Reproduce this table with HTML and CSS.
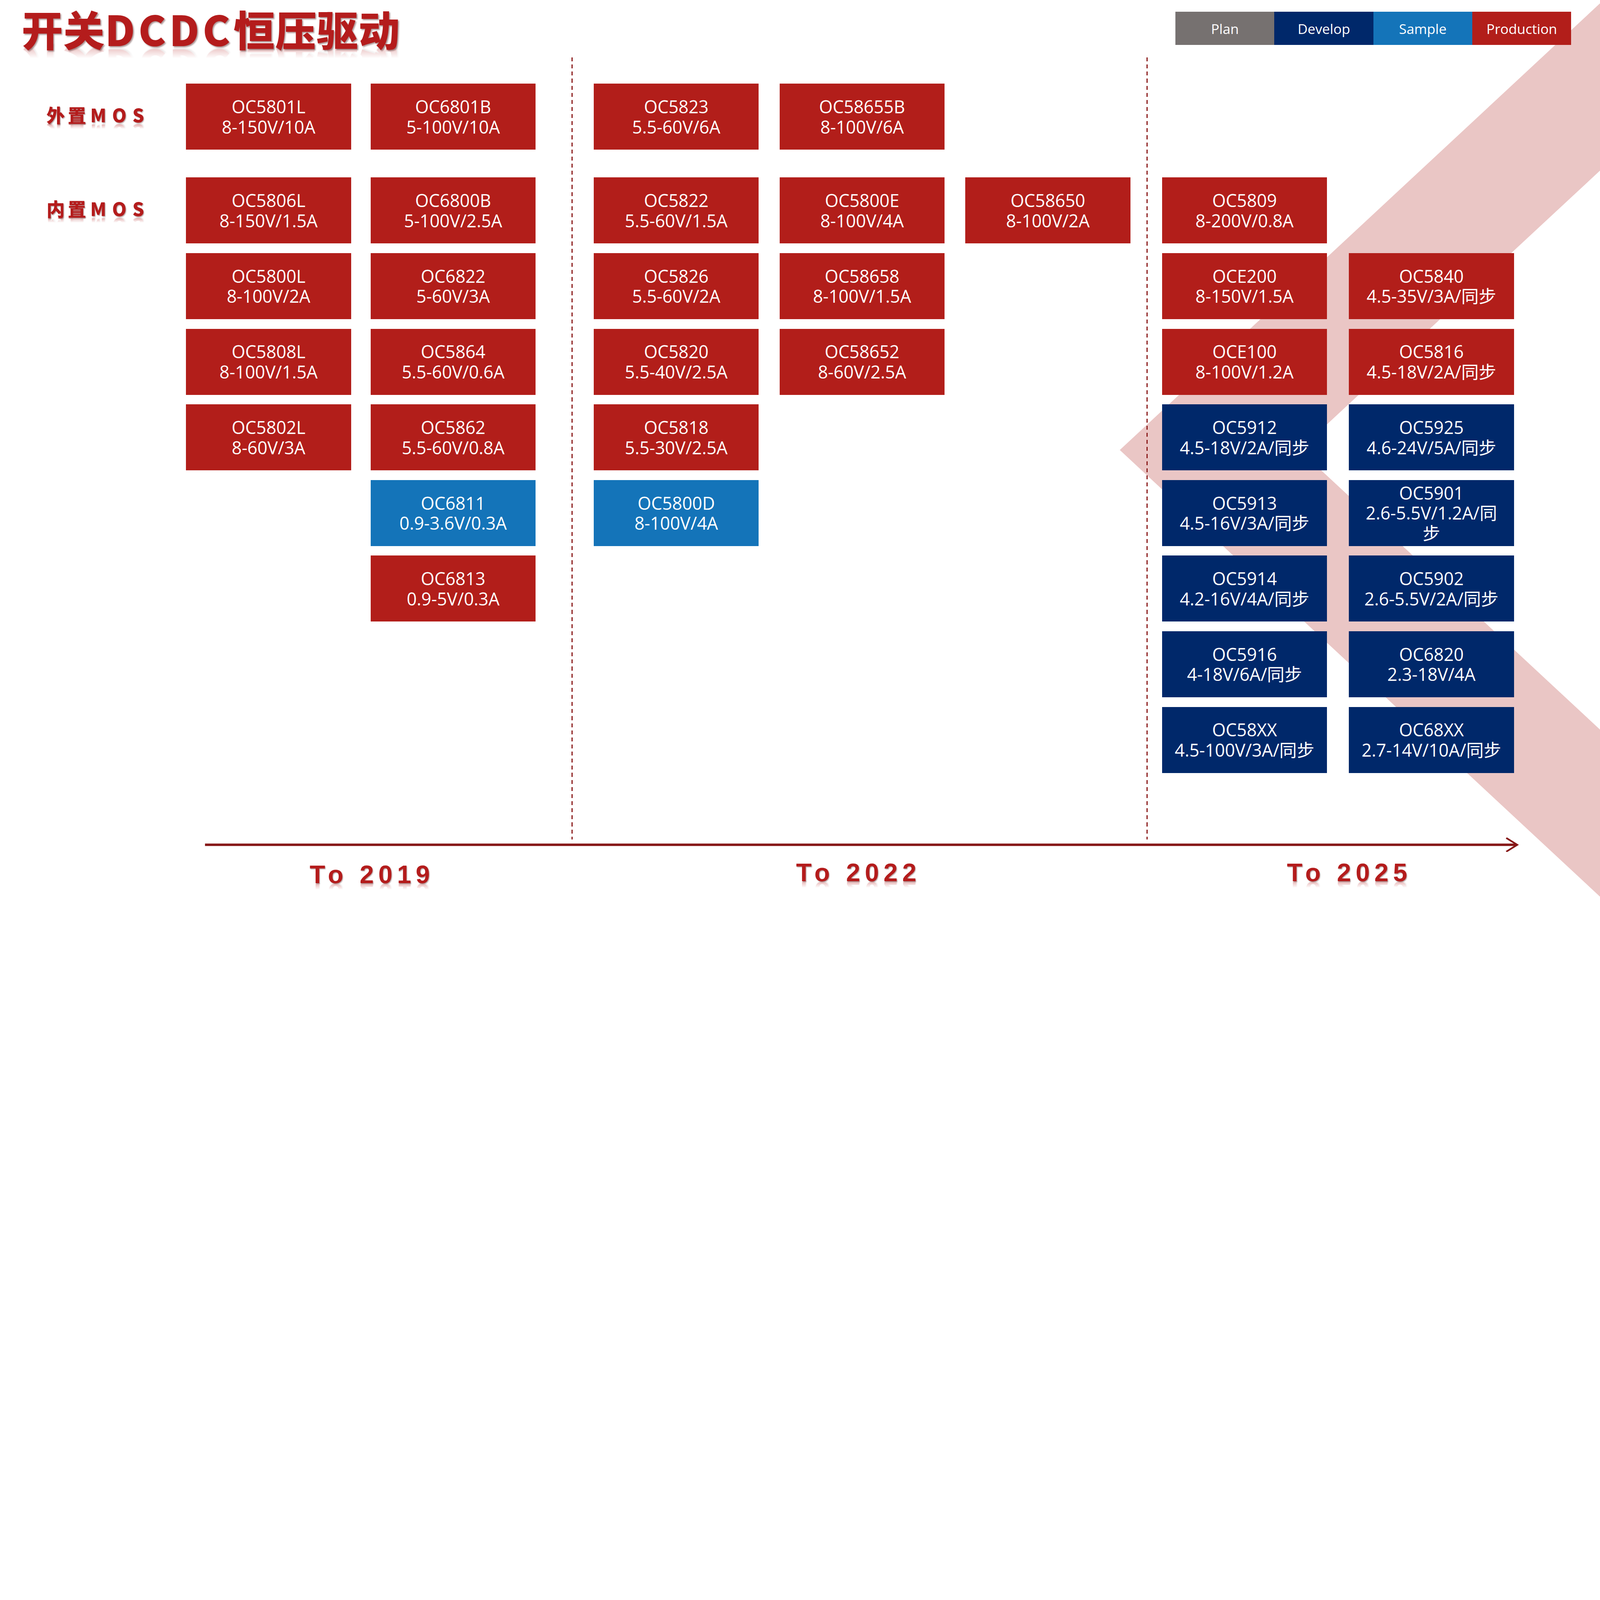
FILE: index.html
```html
<!DOCTYPE html>
<html lang="zh-CN">
<head>
<meta charset="utf-8">
<title>开关DCDC恒压驱动</title>
<link rel="stylesheet" href="styles.css">
</head>
<body>
<div class="slide">
  <svg class="band" viewBox="0 0 7680 4320" preserveAspectRatio="none" aria-hidden="true">
    <polygon points="5375,2160 7680,16 7680,819 6237,2160 7680,3502 7680,4304" fill="#eac6c5"/>
  </svg>

  <header class="top">
    <h1 class="title">开关<span class="latin">DCDC</span>恒压驱动</h1>
    <ul class="legend">
      <li class="plan">Plan</li>
      <li class="develop">Develop</li>
      <li class="sample">Sample</li>
      <li class="production">Production</li>
    </ul>
  </header>

  <main class="board">
    <div class="col labels">
      <div class="rowlabel"><span class="lbl">外置<span class="mos">MOS</span></span></div>
      <div class="rowlabel"><span class="lbl">内置<span class="mos">MOS</span></span></div>
    </div>

    <section class="group g2019">
      <div class="col">
        <div class="box red"><p>OC5801L<br>8-150V/10A</p></div>
        <div class="box red"><p>OC5806L<br>8-150V/1.5A</p></div>
        <div class="box red"><p>OC5800L<br>8-100V/2A</p></div>
        <div class="box red"><p>OC5808L<br>8-100V/1.5A</p></div>
        <div class="box red"><p>OC5802L<br>8-60V/3A</p></div>
      </div>
      <div class="col">
        <div class="box red"><p>OC6801B<br>5-100V/10A</p></div>
        <div class="box red"><p>OC6800B<br>5-100V/2.5A</p></div>
        <div class="box red"><p>OC6822<br>5-60V/3A</p></div>
        <div class="box red"><p>OC5864<br>5.5-60V/0.6A</p></div>
        <div class="box red"><p>OC5862<br>5.5-60V/0.8A</p></div>
        <div class="box blue"><p>OC6811<br>0.9-3.6V/0.3A</p></div>
        <div class="box red"><p>OC6813<br>0.9-5V/0.3A</p></div>
      </div>
    </section>

    <div class="divider d1"></div>

    <section class="group g2022">
      <div class="col">
        <div class="box red"><p>OC5823<br>5.5-60V/6A</p></div>
        <div class="box red"><p>OC5822<br>5.5-60V/1.5A</p></div>
        <div class="box red"><p>OC5826<br>5.5-60V/2A</p></div>
        <div class="box red"><p>OC5820<br>5.5-40V/2.5A</p></div>
        <div class="box red"><p>OC5818<br>5.5-30V/2.5A</p></div>
        <div class="box blue"><p>OC5800D<br>8-100V/4A</p></div>
      </div>
      <div class="col">
        <div class="box red"><p>OC58655B<br>8-100V/6A</p></div>
        <div class="box red"><p>OC5800E<br>8-100V/4A</p></div>
        <div class="box red"><p>OC58658<br>8-100V/1.5A</p></div>
        <div class="box red"><p>OC58652<br>8-60V/2.5A</p></div>
      </div>
      <div class="col">
        <div class="slot"></div>
        <div class="box red"><p>OC58650<br>8-100V/2A</p></div>
      </div>
    </section>

    <div class="divider d2"></div>

    <section class="group g2025">
      <div class="col">
        <div class="slot"></div>
        <div class="box red"><p>OC5809<br>8-200V/0.8A</p></div>
        <div class="box red"><p>OCE200<br>8-150V/1.5A</p></div>
        <div class="box red"><p>OCE100<br>8-100V/1.2A</p></div>
        <div class="box navy"><p>OC5912<br>4.5-18V/2A/同步</p></div>
        <div class="box navy"><p>OC5913<br>4.5-16V/3A/同步</p></div>
        <div class="box navy"><p>OC5914<br>4.2-16V/4A/同步</p></div>
        <div class="box navy"><p>OC5916<br>4-18V/6A/同步</p></div>
        <div class="box navy"><p>OC58XX<br>4.5-100V/3A/同步</p></div>
      </div>
      <div class="col">
        <div class="slot"></div>
        <div class="slot"></div>
        <div class="box red"><p>OC5840<br>4.5-35V/3A/同步</p></div>
        <div class="box red"><p>OC5816<br>4.5-18V/2A/同步</p></div>
        <div class="box navy"><p>OC5925<br>4.6-24V/5A/同步</p></div>
        <div class="box navy"><p>OC5901<br>2.6-5.5V/1.2A/同<br>步</p></div>
        <div class="box navy"><p>OC5902<br>2.6-5.5V/2A/同步</p></div>
        <div class="box navy"><p>OC6820<br>2.3-18V/4A</p></div>
        <div class="box navy"><p>OC68XX<br>2.7-14V/10A/同步</p></div>
      </div>
    </section>
  </main>

  <footer class="timeline">
    <svg class="arrow" viewBox="0 0 7680 70" preserveAspectRatio="none" aria-hidden="true">
      <line x1="984" y1="35" x2="7276" y2="35" stroke="#861717" stroke-width="12"/>
      <polyline points="7230,2 7283,35 7230,68" fill="none" stroke="#861717" stroke-width="8" stroke-linejoin="miter"/>
    </svg>
    <div class="years">
      <div class="year y2019">To 2019</div>
      <div class="year y2022">To 2022</div>
      <div class="year y2025">To 2025</div>
    </div>
  </footer>
</div>
</body>
</html>
```

FILE: styles.css
```css
/* 1rem = 100 reference pixels of the 7680-wide slide */
html {
  font-size: calc(100vw / 76.8);
}

html, body {
  margin: 0;
  padding: 0;
}

body {
  width: 100vw;
  height: calc(100vw * 0.5625);
  overflow: hidden;
  background: #ffffff;
  font-family: "Open Sans", "Noto Sans CJK SC", sans-serif;
}

.slide {
  position: relative;
  z-index: 0;
  width: 76.8rem;
  height: 43.2rem;
  overflow: hidden;
  background: #ffffff;
}

.band {
  position: absolute;
  left: 0;
  top: 0;
  width: 76.8rem;
  height: 43.2rem;
  z-index: -1;
}

/* ---------- header ---------- */
.top {
  height: 2.75rem;
  box-sizing: border-box;
  padding: 0 1.38rem 0 1.04rem;
  display: flex;
  justify-content: space-between;
  align-items: flex-start;
}

.title {
  margin: 0.06rem 0 0;
  font-family: "Noto Sans CJK SC", sans-serif;
  font-weight: 900;
  font-size: 1.98rem;
  line-height: 2.6rem;
  letter-spacing: 0.02rem;
  color: #b41c1c;
  white-space: nowrap;
  text-shadow: 0.05rem 0.06rem 0.06rem rgba(70, 20, 20, 0.45);
  -webkit-box-reflect: below -0.74rem linear-gradient(to bottom, transparent 66.5%, rgba(255, 255, 255, 0.45));
}

.title .latin {
  letter-spacing: 0.16rem;
}

.legend {
  list-style: none;
  margin: 0.57rem 0 0;
  padding: 0;
  display: flex;
}

.legend li {
  width: 4.75rem;
  height: 1.59rem;
  display: flex;
  align-items: center;
  justify-content: center;
  font-family: "Open Sans", sans-serif;
  font-size: 0.66rem;
  color: #ffffff;
}

.legend .plan { background: #767170; }
.legend .develop { background: #00286a; }
.legend .sample { background: #1474b9; }
.legend .production { background: #b21e1a; }

/* ---------- board ---------- */
.board {
  height: 37.55rem;
  box-sizing: border-box;
  padding-top: 1.27rem;
  display: flex;
  align-items: stretch;
}

.col {
  width: 7.92rem;
  display: flex;
  flex-direction: column;
  gap: 0.46rem;
}

.col > :first-child {
  margin-bottom: 0.87rem;
}

.labels {
  width: 8.93rem;
}

.rowlabel {
  height: 3.17rem;
  box-sizing: border-box;
  padding: 0 0 0.22rem 0.5rem;
  display: flex;
  align-items: center;
  justify-content: center;
}

.lbl {
  display: inline-block;
  font-family: "Noto Sans CJK SC", sans-serif;
  font-weight: 900;
  font-size: 0.88rem;
  line-height: 0.88rem;
  letter-spacing: 0.14rem;
  color: #b41c1c;
  white-space: nowrap;
  text-shadow: 0.03rem 0.04rem 0.04rem rgba(70, 20, 20, 0.4);
  -webkit-box-reflect: below -0.04rem linear-gradient(to bottom, transparent 68%, rgba(255, 255, 255, 0.45));
}

.lbl .mos {
  letter-spacing: 0.28rem;
  margin-left: 0.06rem;
}

.group {
  display: flex;
}

.g2019 { gap: 0.94rem; }
.g2022 { gap: 1rem; }
.g2025 { gap: 1.05rem; }

.divider {
  width: 0.05rem;
  margin-top: -1.27rem;
  background: repeating-linear-gradient(to bottom, #8a1a1a 0 0.19rem, transparent 0.19rem 0.34rem);
}

.d1 { margin-left: 1.73rem; margin-right: 1.01rem; }
.d2 { margin-left: 0.77rem; margin-right: 0.7rem; }

.slot {
  height: 3.17rem;
}

.box {
  height: 3.17rem;
  display: flex;
  align-items: center;
  justify-content: center;
  color: #ffffff;
  font-family: "Open Sans", "Noto Sans CJK SC", sans-serif;
  font-size: 0.84rem;
  line-height: 0.97rem;
  white-space: nowrap;
}

.box p {
  margin: 0;
  text-align: center;
}

.red { background: #b21e1a; }
.navy { background: #00286a; }
.blue { background: #1474b9; }

/* ---------- timeline ---------- */
.arrow {
  display: block;
  width: 76.8rem;
  height: 0.7rem;
  margin-top: -0.1rem;
}

.years {
  display: flex;
  align-items: flex-start;
  margin-top: 0.37rem;
}

.year {
  width: 6.1rem;
  text-align: center;
  font-family: "Liberation Sans", Arial, sans-serif;
  font-weight: 700;
  font-size: 1.22rem;
  line-height: 1.22rem;
  letter-spacing: 0.22rem;
  color: #b41c1c;
  white-space: nowrap;
  text-shadow: 0.03rem 0.04rem 0.04rem rgba(70, 20, 20, 0.4);
  -webkit-box-reflect: below -0.34rem linear-gradient(to bottom, transparent 62%, rgba(255, 255, 255, 0.5));
}

.y2019 { margin-left: 14.81rem; margin-top: 0.1rem; }
.y2022 { margin-left: 17.25rem; }
.y2025 { margin-left: 17.46rem; }
```
